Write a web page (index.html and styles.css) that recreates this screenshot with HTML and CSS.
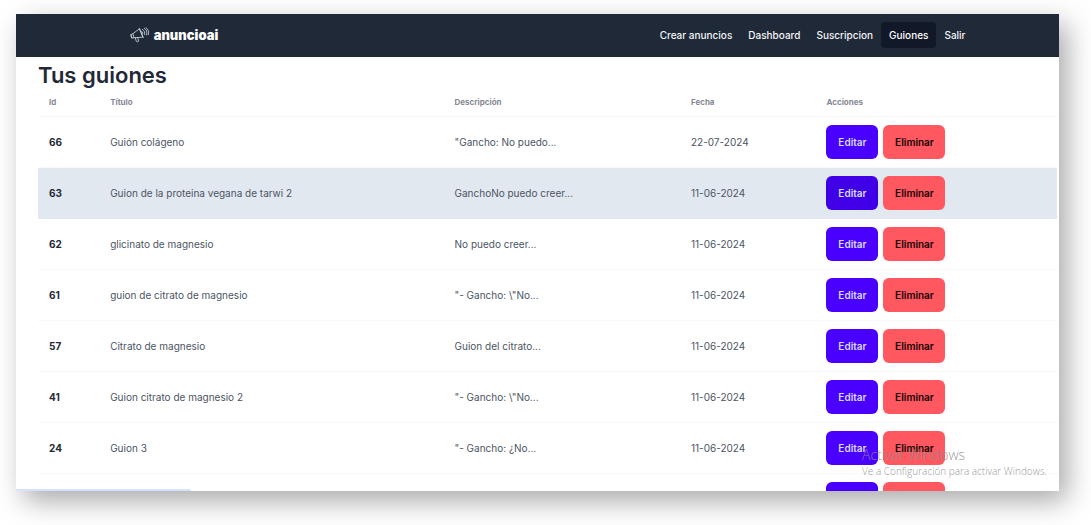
FILE: index.html
```
<!DOCTYPE html>
<html lang="es">
<head>
<meta charset="utf-8">
<title>Tus guiones - anuncioai</title>
<link rel="stylesheet" href="styles.css">
</head>
<body>
<div class="window">
  <header class="navbar">
    <a class="brand" href="#">
      <svg class="brand-icon" viewBox="0 0 20 16" fill="none" stroke="currentColor" stroke-width="0.8" stroke-linecap="round" stroke-linejoin="round" aria-hidden="true">
        <path d="M1.2 7.8 9.6 1.8 12.9 10.2 2.3 10.9ZM.7 7.6 1.8 11.2M2.9 6.7 4 10.7M9.2 1.3 13.3 10.7M5.3 11 6.3 14.3Q7.5 15.5 8.5 14.3L7.9 10.8M11.6 4.3Q13.3 4.7 12.8 6.7M12.5 2.4Q15.4 3.8 14.6 7.6M14.3 1.2Q17.8 3.2 16.7 8M16 .7Q19.6 3 18.4 7.6"/>
      </svg>
      <span>anuncioai</span>
    </a>
    <nav class="menu">
      <a class="menu-link" href="#">Crear anuncios</a>
      <a class="menu-link" href="#">Dashboard</a>
      <a class="menu-link" href="#">Suscripcion</a>
      <a class="menu-link active" href="#" aria-current="page">Guiones</a>
      <a class="menu-link" href="#">Salir</a>
    </nav>
  </header>
  <main class="content">
    <h1 class="title">Tus guiones</h1>
    <table class="scripts">
      <colgroup><col class="col-id"><col class="col-title"><col class="col-description"><col class="col-date"><col></colgroup>
      <thead>
        <tr><th scope="col">Id</th><th scope="col">Título</th><th scope="col">Descripción</th><th scope="col">Fecha</th><th scope="col">Acciones</th></tr>
      </thead>
      <tbody>
        <tr><th scope="row">66</th><td>Guión colágeno</td><td>"Gancho: No puedo...</td><td>22-07-2024</td><td><div class="actions"><button class="btn edit">Editar</button><button class="btn delete">Eliminar</button></div></td></tr>
        <tr class="hovered"><th scope="row">63</th><td>Guion de la proteina vegana de tarwi 2</td><td>GanchoNo puedo creer...</td><td>11-06-2024</td><td><div class="actions"><button class="btn edit">Editar</button><button class="btn delete">Eliminar</button></div></td></tr>
        <tr><th scope="row">62</th><td>glicinato de magnesio</td><td>No puedo creer...</td><td>11-06-2024</td><td><div class="actions"><button class="btn edit">Editar</button><button class="btn delete">Eliminar</button></div></td></tr>
        <tr><th scope="row">61</th><td>guion de citrato de magnesio</td><td>"- Gancho: \"No...</td><td>11-06-2024</td><td><div class="actions"><button class="btn edit">Editar</button><button class="btn delete">Eliminar</button></div></td></tr>
        <tr><th scope="row">57</th><td>Citrato de magnesio</td><td>Guion del citrato...</td><td>11-06-2024</td><td><div class="actions"><button class="btn edit">Editar</button><button class="btn delete">Eliminar</button></div></td></tr>
        <tr><th scope="row">41</th><td>Guion citrato de magnesio 2</td><td>"- Gancho: \"No...</td><td>11-06-2024</td><td><div class="actions"><button class="btn edit">Editar</button><button class="btn delete">Eliminar</button></div></td></tr>
        <tr><th scope="row">24</th><td>Guion 3</td><td>"- Gancho: ¿No...</td><td>11-06-2024</td><td><div class="actions"><button class="btn edit">Editar</button><button class="btn delete">Eliminar</button></div></td></tr>
        <tr><th scope="row"></th><td></td><td></td><td></td><td><div class="actions"><button class="btn edit" aria-label="Editar"></button><button class="btn delete" aria-label="Eliminar"></button></div></td></tr>
      </tbody>
    </table>
  </main>
  <div class="status-bar"></div>
  <div class="watermark">
    <div class="watermark-title">Activar Windows</div>
    <div class="watermark-text">Ve a Configuración para activar Windows.</div>
  </div>
</div>
</body>
</html>
```
FILE: styles.css
```
* { box-sizing: border-box; }

body {
  margin: 0;
  height: 100vh;
  padding: 14px 32px 34px 16px;
  overflow: hidden;
  background: #fff;
  color: #1f2937;
  font-family: Inter, "Liberation Sans", sans-serif;
  font-size: 10px;
  line-height: 16px;
}

.window {
  position: relative;
  height: 100%;
  background: #fff;
  box-shadow: 8px 10px 26px rgba(0, 0, 0, 0.34);
}

.navbar {
  display: flex;
  align-items: center;
  justify-content: space-between;
  height: 43px;
  padding: 0 8.2% 2px 10.9%;
  background: #1f2937;
}

.brand {
  display: flex;
  align-items: center;
  gap: 4px;
  color: #fff;
  font-size: 13px;
  font-weight: 900;
  text-decoration: none;
}

.brand-icon { width: 20px; height: 16px; color: #d7dbe1; }

.menu { display: flex; }

.menu-link {
  padding: 5px 8px;
  border-radius: 4px;
  color: #f3f4f6;
  font-weight: 500;
  text-decoration: none;
}

.menu-link.active { background: #111827; color: #fff; }

.content {
  height: calc(100% - 43px);
  padding: 4px 2px 0 22px;
  overflow: hidden;
}

.title {
  margin: 0;
  font-size: 22px;
  font-weight: 600;
  line-height: 28px;
}

.scripts {
  width: 100%;
  table-layout: fixed;
  border-collapse: separate;
  border-spacing: 0;
  text-align: left;
}

.col-id { width: 6%; }
.col-title { width: 33.8%; }
.col-description { width: 23.2%; }
.col-date { width: 13.3%; }

.scripts th, .scripts td {
  height: 51px;
  padding: 0 11px;
  border-bottom: 1px solid #f8f8f9;
}

.scripts td { color: #4b5563; }

.scripts thead th {
  height: 28px;
  padding-bottom: 2px;
  color: #858993;
  font-size: 8px;
}

.scripts .hovered > * { background: #e2e8f0; border-color: #e2e8f0; }

.actions { display: flex; gap: 5px; }

.btn {
  height: 34px;
  padding: 0 11px;
  border: 0;
  border-radius: 6px;
  font: 600 10px/16px Inter, "Liberation Sans", sans-serif;
}

.edit { width: 52px; background: #4a00ff; color: #d4dbff; }
.hovered .edit { background: #3f00e7; }
.delete { width: 62px; background: #ff5861; color: #160203; }

.status-bar {
  position: absolute;
  left: 0;
  bottom: 0;
  width: 175px;
  height: 2px;
  border-top-right-radius: 2px;
  background: #d3e3fd;
}

.watermark {
  position: absolute;
  right: 12px;
  bottom: 12px;
  color: rgba(140, 140, 140, 0.9);
  font-family: "Open Sans", "Noto Sans", sans-serif;
  font-weight: 300;
}

.watermark-title { font-size: 14px; }
.watermark-text { font-size: 10px; }
```
